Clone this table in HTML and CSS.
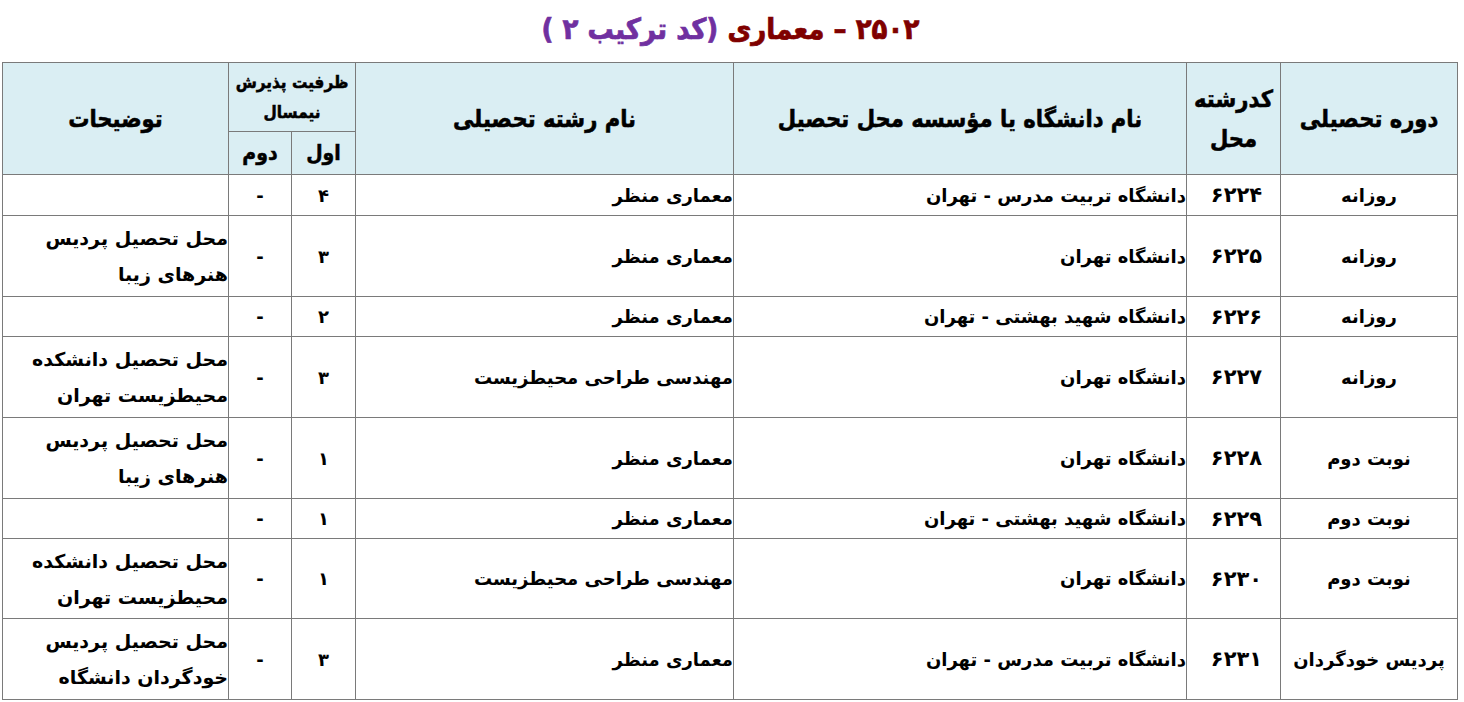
FILE: index.html
```html
<!DOCTYPE html>
<html lang="fa" dir="rtl">
<head>
<meta charset="utf-8">
<link rel="stylesheet" href="styles.css">
</head>
<body>
<div class="page">
  <h1 class="title"><span class="t-red">۲۵۰۲ – معماری</span> <span class="t-purple">(کد ترکیب ۲ )</span></h1>
  <table class="grid">
    <colgroup>
      <col class="c-period"><col class="c-code"><col class="c-uni"><col class="c-field"><col class="c-first"><col class="c-second"><col class="c-notes">
    </colgroup>
    <thead>
      <tr class="h1">
        <th rowspan="2" class="hbig">دوره تحصیلی</th>
        <th rowspan="2" class="hbig">کدرشته<br>محل</th>
        <th rowspan="2" class="hbig">نام دانشگاه یا مؤسسه محل تحصیل</th>
        <th rowspan="2" class="hbig">نام رشته تحصیلی</th>
        <th colspan="2" class="hsmall">ظرفیت پذیرش<br>نیمسال</th>
        <th rowspan="2" class="hbig">توضیحات</th>
      </tr>
      <tr class="h2">
        <th class="hmid">اول</th>
        <th class="hmid">دوم</th>
      </tr>
    </thead>
    <tbody>
      <tr class="r41"><td class="ctr">روزانه</td><td class="code">۶۲۲۴</td><td>دانشگاه تربیت مدرس - تهران</td><td>معماری منظر</td><td class="ctr">۴</td><td class="ctr">-</td><td></td></tr>
      <tr class="r81"><td class="ctr">روزانه</td><td class="code">۶۲۲۵</td><td>دانشگاه تهران</td><td>معماری منظر</td><td class="ctr">۳</td><td class="ctr">-</td><td class="note">محل تحصیل پردیس<br>هنرهای زیبا</td></tr>
      <tr class="r40"><td class="ctr">روزانه</td><td class="code">۶۲۲۶</td><td>دانشگاه شهید بهشتی - تهران</td><td>معماری منظر</td><td class="ctr">۲</td><td class="ctr">-</td><td></td></tr>
      <tr class="r81"><td class="ctr">روزانه</td><td class="code">۶۲۲۷</td><td>دانشگاه تهران</td><td>مهندسی طراحی محیطزیست</td><td class="ctr">۳</td><td class="ctr">-</td><td class="note">محل تحصیل دانشکده<br>محیطزیست تهران</td></tr>
      <tr class="r81"><td class="ctr">نوبت دوم</td><td class="code">۶۲۲۸</td><td>دانشگاه تهران</td><td>معماری منظر</td><td class="ctr">۱</td><td class="ctr">-</td><td class="note">محل تحصیل پردیس<br>هنرهای زیبا</td></tr>
      <tr class="r40"><td class="ctr">نوبت دوم</td><td class="code">۶۲۲۹</td><td>دانشگاه شهید بهشتی - تهران</td><td>معماری منظر</td><td class="ctr">۱</td><td class="ctr">-</td><td></td></tr>
      <tr class="r80"><td class="ctr">نوبت دوم</td><td class="code">۶۲۳۰</td><td>دانشگاه تهران</td><td>مهندسی طراحی محیطزیست</td><td class="ctr">۱</td><td class="ctr">-</td><td class="note">محل تحصیل دانشکده<br>محیطزیست تهران</td></tr>
      <tr class="r81"><td class="ctr">پردیس خودگردان</td><td class="code">۶۲۳۱</td><td>دانشگاه تربیت مدرس - تهران</td><td>معماری منظر</td><td class="ctr">۳</td><td class="ctr">-</td><td class="note">محل تحصیل پردیس<br>خودگردان دانشگاه</td></tr>
    </tbody>
  </table>
</div>
</body>
</html>
```

FILE: styles.css
```css
html, body {
  margin: 0;
  padding: 0;
  background: #ffffff;
}
body {
  font-family: "DejaVu Sans", "Noto Sans", sans-serif;
  color: #000;
}
.page {
  margin: 0 6px 0 3px;
}
.title {
  margin: 0;
  height: 62px;
  line-height: 58px;
  text-align: center;
  font-family: "DejaVu Sans Condensed", "DejaVu Sans", sans-serif;
  font-size: 29px;
  font-weight: bold;
  -webkit-text-stroke: 0.7px currentColor;
}
.t-red { color: #7f0000; }
.t-purple { color: #7030a0; }

.grid {
  width: 1455px;
  border-collapse: collapse;
  table-layout: fixed;
  direction: rtl;
}
.c-period { width: 177px; }
.c-code { width: 94px; }
.c-uni { width: 453px; }
.c-field { width: 378px; }
.c-first { width: 64px; }
.c-second { width: 63px; }
.c-notes { width: 226px; }

.grid th, .grid td {
  border: 1px solid #7a7a7a;
  padding: 0;
  font-weight: bold;
}
.grid th {
  background: #daeef3;
  text-align: center;
  font-family: "DejaVu Sans Condensed", "DejaVu Sans", sans-serif;
  -webkit-text-stroke: 0.5px #000;
}
.hbig { font-size: 23.5px; line-height: 40px; }
.hsmall { font-size: 17px; line-height: 30px; }
.hmid { font-size: 21px; }
.h1 { height: 69px; }
.h2 { height: 43px; }

.grid td {
  font-size: 18px;
  text-align: right;
  vertical-align: middle;
}
.grid td.ctr { text-align: center; }
.grid td.code { text-align: center; font-size: 21px; letter-spacing: 1px; padding-left: 6px; }
.grid td.note { font-size: 19px; line-height: 36px; }
.r41 { height: 41px; }
.r40 { height: 40px; }
.r80 { height: 80px; }
.r81 { height: 81px; }
```
